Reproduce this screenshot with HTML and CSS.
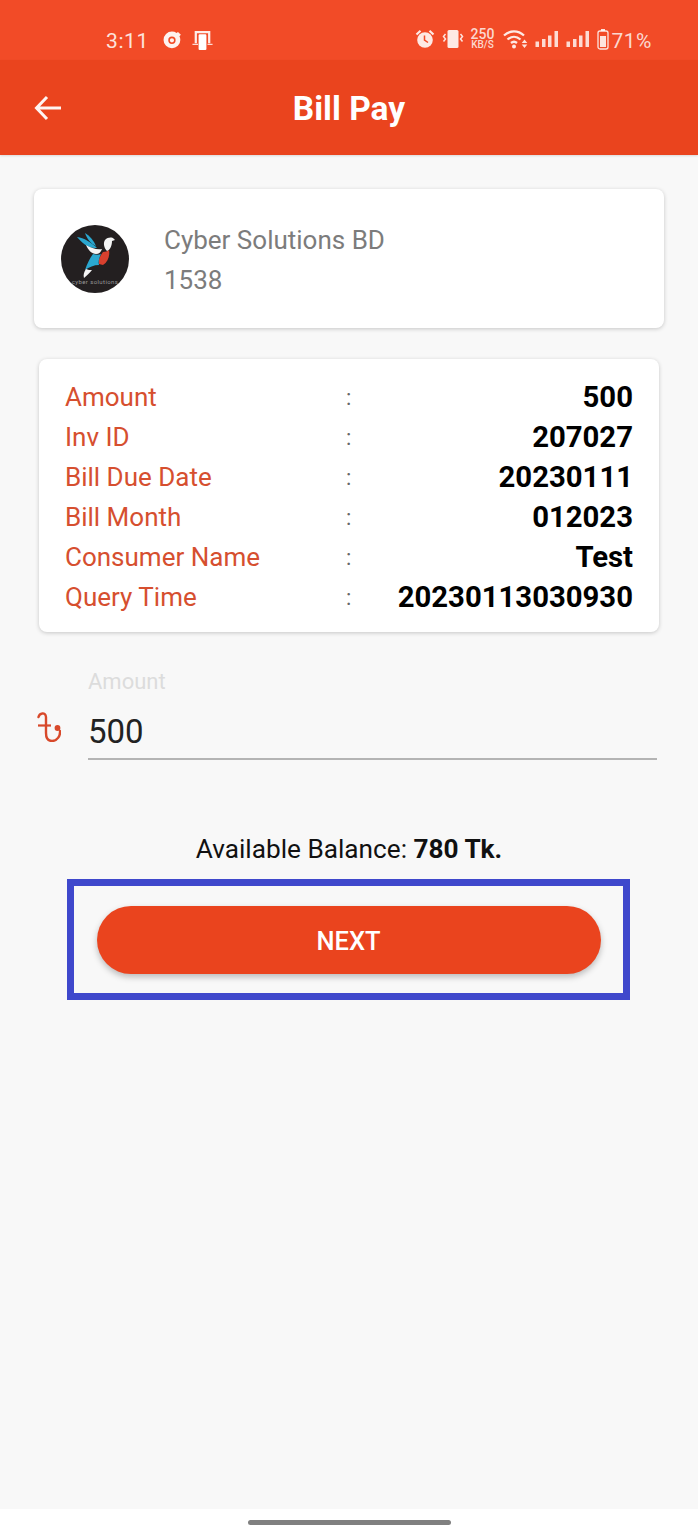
FILE: index.html
```html
<!DOCTYPE html>
<html lang="en">
<head>
<meta charset="utf-8">
<title>Bill Pay</title>
<link rel="stylesheet" href="styles.css">
</head>
<body>
<div class="page">
  <div class="statusbar">
    <div class="status-left">
      <span class="time">3:11</span>
      <svg class="ico-notif1" viewBox="2 2 17 17"><path fill="#fff" fill-opacity=".93" d="M10 2.500a7.500 7.500 0 1 0 7.500 7.500c0-1.200-.3-2.400-.8-3.400l1.300-1.300L15.400 2.800l-1.200 1A7.400 7.400 0 0 0 10 2.500Z"/><circle cx="10" cy="10.300" r="2.600" fill="none" stroke="#f24b27" stroke-width="1.400"/></svg>
      <svg class="ico-notif2" viewBox="1 2 18 17"><path fill="#fff" fill-opacity=".9" d="M3 2h14v11h-2V4H5v9H3Z"/><rect x="6.500" y="5" width="7" height="14" rx="1" fill="#fff"/><path stroke="#fff" stroke-opacity=".8" stroke-width="1.200" d="M1 14h5M14.500 14H19"/></svg>
    </div>
    <div class="status-right">
      <svg class="ico-alarm" viewBox="0 0 20 20"><circle cx="10" cy="11" r="7.800" fill="#fff" fill-opacity=".88"/><path d="M9.500 6.500V11l3.500 2.500" fill="none" stroke="#f24b27" stroke-width="1.500"/><path d="M1.500 5.500 5.500 1.800M18.500 5.500 14.500 1.800" stroke="#fff" stroke-opacity=".88" stroke-width="2.200"/></svg>
      <svg class="ico-vib" viewBox="0 0 22 20"><rect x="5.500" y="1" width="11" height="18" rx="1.500" fill="#fff" fill-opacity=".88"/><path d="M3.500 5 1.500 7.500l2 2.500-2 2.500M18.500 5l2 2.500-2 2.500 2 2.500" fill="none" stroke="#fff" stroke-opacity=".85" stroke-width="1.500"/></svg>
      <span class="speed"><span class="speed-num">250</span><span class="speed-unit">KB/S</span></span>
      <svg class="ico-wifi" viewBox="0 0 26 20"><g fill="none" stroke="#fff" stroke-opacity=".88" stroke-width="2.300"><path d="M1 6.500C7 1 15 1 21 6.500"/><path d="M4.500 10.500c4-3.600 9-3.600 13 0"/><path d="M8 14c2-1.700 4-1.700 6 0"/></g><circle cx="11" cy="17.500" r="2" fill="#fff" fill-opacity=".88"/><path fill="#fff" fill-opacity=".85" d="m21.500 10.500 2.800 3.500h-5.600Zm0 8.500-2.800-3.500h5.600Z"/></svg>
      <svg class="ico-signal" viewBox="0 0 24 18"><g fill="#fff" fill-opacity=".8"><rect x="1" y="11.500" width="3.500" height="5.500"/><rect x="7.500" y="9" width="3.500" height="8"/><rect x="13.500" y="5.500" width="3.500" height="11.500"/><rect x="20" y="1" width="3.500" height="16"/></g></svg>
      <svg class="ico-signal" viewBox="0 0 24 18"><g fill="#fff" fill-opacity=".8"><rect x="1" y="11.500" width="3.500" height="5.500"/><rect x="7.500" y="9" width="3.500" height="8"/><rect x="13.500" y="5.500" width="3.500" height="11.500"/><rect x="20" y="1" width="3.500" height="16"/></g></svg>
      <svg class="ico-batt" viewBox="0 0 12 22"><path d="M4 1h4v2H4Z" fill="#fff" fill-opacity=".85"/><rect x="1" y="3" width="10" height="18" rx="2" fill="none" stroke="#fff" stroke-opacity=".85" stroke-width="1.300"/><rect x="3" y="8" width="6" height="11" fill="#fff" fill-opacity=".85"/></svg>
      <span class="pct">71%</span>
    </div>
  </div>

  <header class="appbar">
    <svg class="back" viewBox="0 0 28 26"><path d="M27 13H2.500M13 2 2.500 13 13 24" fill="none" stroke="#fff" stroke-opacity=".95" stroke-width="3"/></svg>
    <h1 class="title">Bill Pay</h1>
  </header>

  <main class="content">
    <section class="card biller">
      <svg class="logo" viewBox="0 0 68 68">
        <circle cx="34" cy="34" r="34" fill="#231f20"/>
        <path fill="#2aa7cf" d="M16 12c7 1 14 5 20 11-8 1-15-5-20-11Z"/>
        <path fill="#2aa7cf" d="M24 8c5 3 9 8 11 13-5-2-9-7-11-13Z"/>
        <path fill="#f4f4f4" d="M25 20c5 3 11 5 16 4-1 3-3 5-6 5-4 0-8-4-10-9Z"/>
        <path fill="#f4f4f4" d="M44 15c3-3 7-3 9-1l1 1-3 1c0 5-2 9-5 10-3-3-4-8-2-11Z"/>
        <path fill="#d8402e" d="M42 27c2 0 5-1 6-2 1 6-1 12-6 15l-4-1c-1-4 1-8 4-12Z"/>
        <path fill="#2aa7cf" d="M24 45c2-6 5-12 8-16 3 1 6 1 8 0-2 4-3 8-2 11-5 0-10 2-14 5Z"/>
        <path fill="#f4f4f4" d="M25 44c2 1 4 1 6 1-2 3-5 5-8 8-1-3 0-6 2-9Z"/>
        <text class="logo-text" x="34" y="59" text-anchor="middle">cyber solutions</text>
      </svg>
      <div class="biller-info">
        <div class="biller-name">Cyber Solutions BD</div>
        <div class="biller-code">1538</div>
      </div>
    </section>

    <section class="card details">
      <div class="row"><span class="label">Amount</span><span class="colon">:</span><span class="value">500</span></div>
      <div class="row"><span class="label">Inv ID</span><span class="colon">:</span><span class="value">207027</span></div>
      <div class="row"><span class="label">Bill Due Date</span><span class="colon">:</span><span class="value">20230111</span></div>
      <div class="row"><span class="label">Bill Month</span><span class="colon">:</span><span class="value">012023</span></div>
      <div class="row"><span class="label">Consumer Name</span><span class="colon">:</span><span class="value">Test</span></div>
      <div class="row"><span class="label">Query Time</span><span class="colon">:</span><span class="value">20230113030930</span></div>
    </section>

    <section class="field">
      <svg class="taka" viewBox="0 0 24 30"><path d="M1.500 5C2.500 1 8.500-.5 9 5v16c0 5 2 8 6 8 5 0 8.500-5 8-10" fill="none" stroke="#d8492b" stroke-width="2.400" stroke-linecap="round"/><path d="M1 13.500h13" fill="none" stroke="#d8492b" stroke-width="2.200"/><circle cx="20.500" cy="16" r="2.900" fill="#d8492b"/></svg>
      <div class="field-box">
        <div class="field-label">Amount</div>
        <div class="field-value">500</div>
      </div>
    </section>

    <p class="balance">Available Balance: <strong>780 Tk.</strong></p>

    <div class="highlight">
      <button class="next" type="button">NEXT</button>
    </div>
  </main>

  <footer class="navbar"><span class="home-pill"></span></footer>
</div>
</body>
</html>
```

FILE: styles.css
```css
* { box-sizing: border-box; }
html, body { margin: 0; padding: 0; }
body { font-family: Roboto, "Liberation Sans", sans-serif; background: #f8f8f8; }
.page { width: 698px; height: 1536px; display: flex; flex-direction: column; overflow: hidden; }

.statusbar { height: 60px; flex: none; background: #f24b27; display: flex; justify-content: space-between; align-items: center; padding: 21px 46px 0 106px; color: #fff; }
.status-left { display: flex; align-items: center; }
.status-right { display: flex; align-items: center; padding-bottom: 3px; }
.time { font-size: 21px; font-weight: 400; letter-spacing: .6px; color: #fde3dc; margin-right: 14px; }
.ico-notif1 { width: 19px; height: 19px; margin-right: 10px; }
.ico-notif2 { width: 21px; height: 19px; }
.ico-alarm { width: 20px; height: 20px; margin-right: 7px; }
.ico-vib { width: 22px; height: 20px; margin-right: 6px; }
.speed { display: flex; flex-direction: column; align-items: center; color: #fbd8cf; font-weight: 500; margin-right: 7px; width: 26px; }
.speed-num { font-size: 14px; line-height: 12px; }
.speed-unit { font-size: 10px; line-height: 10px; }
.ico-wifi { width: 26px; height: 20px; margin-right: 5px; }
.ico-signal { width: 25px; height: 18px; margin-right: 6px; }
.ico-batt { width: 12px; height: 22px; margin-right: 3px; margin-left: 1px; }
.pct { font-size: 21px; letter-spacing: .5px; color: #fbd8cf; margin-top: 3px; }

.appbar { height: 95px; flex: none; background: #ea441e; display: flex; align-items: center; justify-content: center; position: relative; box-shadow: 0 1px 2px rgba(0,0,0,.12); }
.back { position: absolute; left: 34px; top: 35px; width: 28px; height: 26px; }
.title { margin: 0; font-size: 33.500px; font-weight: 700; color: #fff; padding-top: 1px; }

.content { flex: 1; display: flex; flex-direction: column; padding-top: 34px; }
.card { background: #fff; border-radius: 8px; box-shadow: 0 1px 4px rgba(0,0,0,.2); }
.biller { margin: 0 34px; height: 139px; display: flex; align-items: center; padding-left: 27px; }
.logo { width: 68px; height: 68px; flex: none; }
.logo-text { font-family: Roboto, sans-serif; font-size: 6px; letter-spacing: .4px; fill: #999; }
.biller-info { margin-left: 35px; color: #7c7c7c; font-size: 26px; line-height: 40px; padding-top: 2px; }

.details { margin: 31px 39px 0; height: 273px; padding: 18px 26px 0; }
.row { display: grid; grid-template-columns: 281px 1fr auto; height: 40px; align-items: center; }
.label { color: #d64f2f; font-size: 26px; }
.colon { color: #666; font-size: 22px; }
.value { color: #000; font-size: 29.300px; font-weight: 700; text-align: right; }

.field { display: flex; align-items: flex-end; margin: 34px 41px 0 37px; height: 94px; }
.taka { width: 24px; height: 30px; flex: none; margin-right: 27px; margin-bottom: 18px; }
.field-box { flex: 1; border-bottom: 2px solid #b4b4b4; height: 94px; }
.field-label { color: #dcdcdc; font-size: 22px; line-height: 30px; margin-top: 1px; }
.field-value { color: #222; font-size: 33px; line-height: 44px; margin-top: 13px; }

.balance { margin: 74px 0 0; text-align: center; color: #111; font-size: 26.200px; line-height: 30px; }
.balance strong { font-weight: 700; }

.highlight { margin: 15px 68px 0 67px; height: 121px; border: 7px solid #3f48cc; display: flex; align-items: center; justify-content: center; }
.next { width: 504px; height: 68px; margin-top: 1px; border: 0; border-radius: 34px; background: #ea441e; color: #fff; font-family: inherit; font-size: 25.500px; font-weight: 500; padding-top: 2px; box-shadow: 0 3px 6px rgba(0,0,0,.25); }

.navbar { height: 27px; flex: none; background: #fff; display: flex; justify-content: center; padding-top: 11px; }
.home-pill { width: 203px; height: 5px; border-radius: 3px; background: #808080; }
```
